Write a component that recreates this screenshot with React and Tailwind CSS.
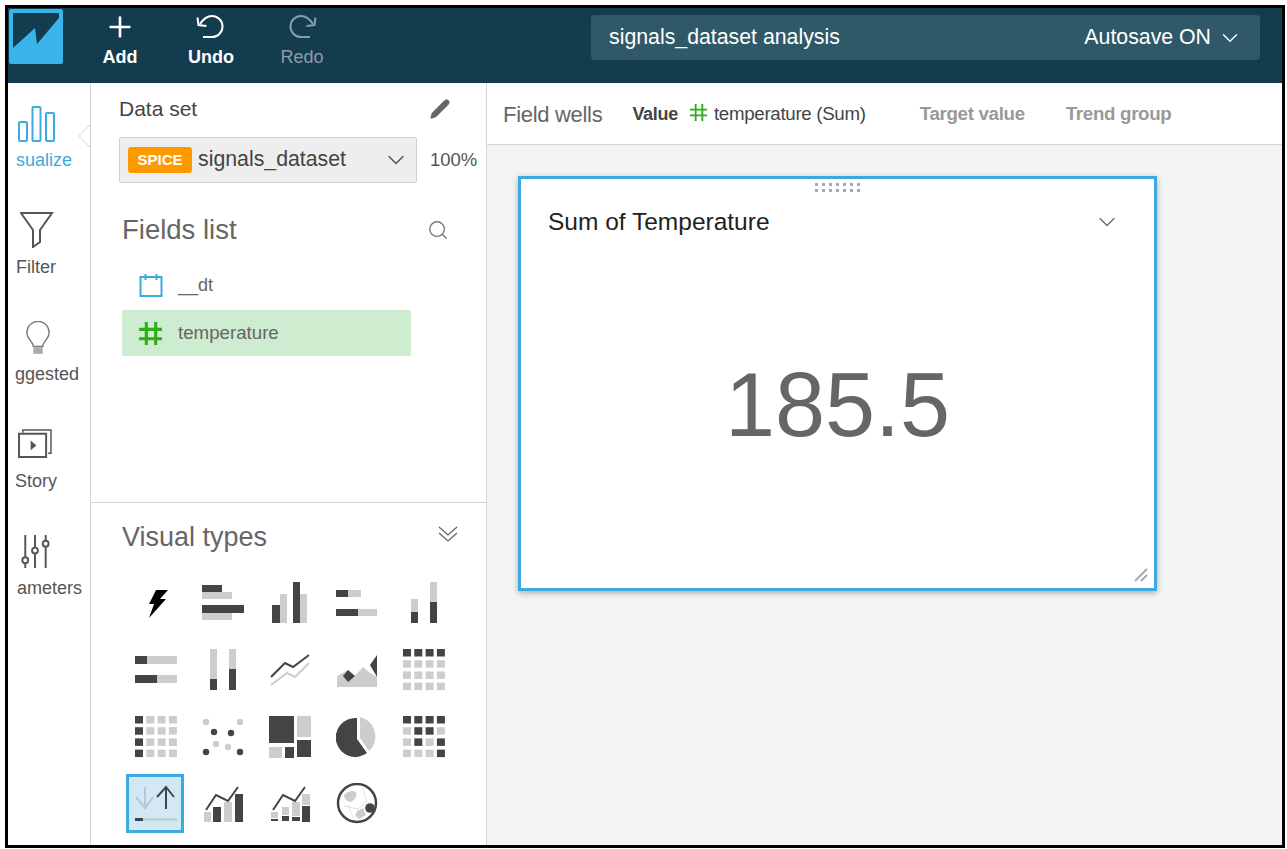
import React from 'react';
import { Plus, ChevronDown, Search, Pencil } from 'lucide-react';

const DARK = '#444444';
const LIGHT = '#cdcdcd';

// [x, y, w, h, dark?]
const Bars = ({ rects }) => (
  <svg viewBox="0 0 42 42" className="w-[42px] h-[42px]">
    {rects.map(([x, y, w, h, d], i) => (
      <rect key={i} x={x} y={y} width={w} height={h} fill={d ? DARK : LIGHT} />
    ))}
  </svg>
);

const Cells = ({ dark }) => {
  const rects = [];
  for (let r = 0; r < 4; r++) {
    for (let c = 0; c < 4; c++) {
      rects.push([c * 11.3, r * 11.2, 8, 7.5, dark.includes(r * 4 + c)]);
    }
  }
  return <Bars rects={rects} />;
};

const Svg42 = ({ children }) => (
  <svg viewBox="0 0 42 42" className="w-[42px] h-[42px]" fill="none">
    {children}
  </svg>
);

const VISUALS = [
  <Svg42 key="autograph">
    <path d="M21 8h12l-8 9h6L14 36l5-14h-5z" fill="#000" />
  </Svg42>,
  <Bars key="hbar" rects={[[0, 3, 20, 7, 1], [0, 10, 30, 7], [0, 23, 42, 8, 1], [0, 31, 30, 7]]} />,
  <Bars key="vbar" rects={[[3, 23, 8, 18, 1], [11, 12, 7, 29], [24, 0, 7, 41, 1], [31, 12, 7, 29]]} />,
  <Bars key="hstack" rects={[[0, 8, 12, 7, 1], [12, 8, 13, 7], [0, 27, 22, 7, 1], [22, 27, 19, 7]]} />,
  <Bars key="vstack" rects={[[8, 17, 7, 13], [8, 30, 7, 11, 1], [27, 0, 7, 20], [27, 20, 7, 21, 1]]} />,
  <Bars key="hstack100" rects={[[0, 7, 42, 8], [0, 7, 12, 8, 1], [0, 26, 42, 8], [0, 26, 22, 8, 1]]} />,
  <Bars key="vstack100" rects={[[8, 0, 7, 41], [8, 30, 7, 11, 1], [27, 0, 7, 41], [27, 20, 7, 21, 1]]} />,
  <Svg42 key="line">
    <path d="M2 28L16 14l8 4L40 6" stroke={DARK} strokeWidth="2" />
    <path d="M2 36l16-12 8 4L40 14" stroke={LIGHT} strokeWidth="2" />
  </Svg42>,
  <Svg42 key="area">
    <path d="M1 27l11-6 7 6 8-9 7 6 7 4v10H1z" fill={LIGHT} />
    <path d="M7 27l5-6 7 6-7 6z" fill={DARK} />
    <path d="M34 16l7-10v22z" fill={DARK} />
  </Svg42>,
  <Cells key="pivot" dark={[0, 1, 2, 3]} />,
  <Cells key="table" dark={[0, 4, 8, 12]} />,
  <Svg42 key="scatter">
    {[[4, 6], [38, 6], [14, 28], [26, 31]].map(([cx, cy]) => (
      <circle key={`${cx}-${cy}`} cx={cx} cy={cy} r="3.2" fill={LIGHT} />
    ))}
    {[[12, 16], [29, 17], [4, 36], [38, 36]].map(([cx, cy]) => (
      <circle key={`${cx}-${cy}`} cx={cx} cy={cy} r="3.2" fill={DARK} />
    ))}
  </Svg42>,
  <Bars key="tree" rects={[[0, 0, 25, 27, 1], [28, 0, 14, 21], [28, 24, 14, 17, 1], [0, 31, 13, 11], [16, 31, 9, 11, 1]]} />,
  <Svg42 key="pie">
    <path d="M24 1A20 20 0 0 1 33 35L24 22z" fill={LIGHT} />
    <path d="M21 2A19.5 19.5 0 1 0 31 37L21 23z" fill={DARK} />
  </Svg42>,
  <Cells key="heat" dark={[0, 1, 2, 3, 5, 6, 9, 11, 15]} />,
  <Svg42 key="kpi">
    <path d="M10 4v21M1 14l9 11 8-11" stroke="#bcc6cb" strokeWidth="2" />
    <path d="M31 26V5M22 14l9-10 8 10" stroke={DARK} strokeWidth="2" />
    <rect x="0" y="35.5" width="42" height="2" fill="#bcc6cb" />
    <rect x="0" y="35" width="8" height="3" fill={DARK} />
  </Svg42>,
  <Svg42 key="combo">
    <rect x="2" y="29" width="7" height="10" fill={LIGHT} />
    <rect x="11" y="24" width="8" height="15" fill={DARK} />
    <rect x="22" y="19" width="8" height="20" fill={LIGHT} />
    <rect x="33" y="11" width="8" height="28" fill={DARK} />
    <path d="M4 27L14 12l12 6L36 4" stroke={DARK} strokeWidth="2" />
  </Svg42>,
  <Svg42 key="combo-stack">
    <rect x="2" y="29" width="7" height="6" fill={LIGHT} />
    <rect x="2" y="36" width="7" height="2" fill={DARK} />
    <rect x="13" y="24" width="7" height="8" fill={LIGHT} />
    <rect x="13" y="33" width="7" height="5" fill={DARK} />
    <rect x="23" y="19" width="8" height="14" fill={LIGHT} />
    <rect x="23" y="34" width="8" height="4" fill={DARK} />
    <rect x="33" y="11" width="8" height="11" fill={LIGHT} />
    <rect x="33" y="23" width="8" height="16" fill={DARK} />
    <path d="M4 27L14 12l12 6L36 4" stroke={DARK} strokeWidth="2" />
  </Svg42>,
  <Svg42 key="map">
    <path d="M8 12c4-4 9-5 12-3 1 4-1 9-6 10-3-1-6-3-6-7z" fill={LIGHT} />
    <path d="M21 28l6-3 3 7-7 4-4-3z" fill={LIGHT} />
    <path d="M26 4l5 14-9 8-14-3M12 22l6 15" stroke="#e2e2e2" strokeWidth="1" />
    <circle cx="21" cy="20" r="19" stroke={DARK} strokeWidth="2.5" />
    <circle cx="34" cy="25" r="4.8" fill={DARK} />
  </Svg42>,
];

const BarChartIcon = () => (
  <svg viewBox="0 0 37 38" className="w-[37px] h-[38px]" fill="none" stroke="#3ea9df" strokeWidth="2">
    <rect x="1" y="17" width="8" height="19" rx="1" />
    <rect x="14.5" y="2" width="8" height="34" rx="1" />
    <rect x="28" y="8" width="8" height="28" rx="1" />
  </svg>
);

const FunnelIcon = () => (
  <svg viewBox="0 0 34 36" className="w-[34px] h-[36px]" fill="none" stroke="#555" strokeWidth="2">
    <path d="M1 1h31L20 18v12l-7 5V18z" />
  </svg>
);

const BulbIcon = () => (
  <svg viewBox="0 0 28 38" className="w-[26px] h-[36px]" fill="none">
    <path d="M9 27c0-5-7-8-7-15a12 12 0 0 1 24 0c0 7-7 10-7 15z" stroke="#777" strokeWidth="1.5" />
    <rect x="9" y="28" width="10" height="7" fill="#aaa" />
  </svg>
);

const StoryIcon = () => (
  <svg viewBox="0 0 38 32" className="w-[37px] h-[31px]" fill="none" stroke="#555" strokeWidth="1.5">
    <path d="M7 5V2h29v24h-3" />
    <path d="M3 6h28v24H3z" strokeWidth="2" />
    <path d="M15 13l6 5-6 5z" fill="#555" stroke="none" />
  </svg>
);

const SlidersIcon = () => (
  <svg viewBox="0 0 30 36" className="w-[30px] h-[35px]" fill="none" stroke="#555" strokeWidth="2">
    <path d="M5 1v23m0 6v5M15 1v13m0 6v15M26 1v6m0 6v22" />
    <circle cx="5" cy="27" r="3" />
    <circle cx="15" cy="17" r="3" />
    <circle cx="26" cy="10" r="3" />
  </svg>
);

const UndoIcon = ({ color, flip }) => (
  <svg
    viewBox="0 0 30 26"
    className={`w-[30px] h-[26px] ${flip ? '-scale-x-100' : ''}`}
    fill="none"
    stroke={color}
    strokeWidth="2"
  >
    <path d="M4 10C8 4 12 2 16 2a10.5 10.5 0 0 1 0 21H7" />
    <path d="M1.5 3.5L2.5 11l8 1" />
  </svg>
);

const NAV = [
  { label: 'sualize', icon: <BarChartIcon />, box: 'pl-[8px] h-[107px]', iconBox: 'h-[46px] pl-[2px] pt-[3px]', text: 'text-[#3ea9df]' },
  { label: 'Filter', icon: <FunnelIcon />, box: 'pl-[8px] h-[107px]', iconBox: 'h-[46px] pl-[4px] pt-[2px]', text: 'text-[#555]' },
  { label: 'ggested', icon: <BulbIcon />, box: 'pl-[7px] h-[107px]', iconBox: 'h-[46px] pl-[10px] pt-[5px]', text: 'text-[#555]' },
  { label: 'Story', icon: <StoryIcon />, box: 'pl-[7px] h-[107px]', iconBox: 'h-[46px] pl-[1px]', text: 'text-[#555]' },
  { label: 'ameters', icon: <SlidersIcon />, box: 'pl-[9px] h-[107px]', iconBox: 'h-[46px] pl-[3px] pt-[2px]', text: 'text-[#555]' },
];

const ToolButton = ({ icon, label, muted, className }) => (
  <div className={`flex flex-col items-center ${className}`}>
    <div className="h-[38px] flex items-center">{icon}</div>
    <span className={`text-[18px] leading-[22px] ${muted ? 'text-[#8b9da6]' : 'text-white font-bold'}`}>{label}</span>
  </div>
);

const App = () => {
  return (
    <div className="w-[1287px] h-[849px] bg-white pt-[5px] pl-[5px] pr-[2px] pb-[1px] font-['Liberation_Sans',Arial,sans-serif]">
      <div className="w-full h-full border-[3px] border-black flex flex-col overflow-hidden">
        {/* top bar */}
        <header className="h-[75px] shrink-0 bg-[#143c4f] flex items-start">
          <div className="w-[54px] h-[55px] mt-[1px] ml-[1px] bg-[#3bb4ec] rounded-[2px]">
            <svg viewBox="0 0 54 55" className="w-full h-full">
              <path d="M4 4h46v5L28 35l-2-16L4 39z" fill="#143c4f" />
            </svg>
          </div>
          <div className="flex">
            <ToolButton className="w-[60px] ml-[27px]" icon={<Plus size={32} color="#fff" strokeWidth={2} />} label="Add" />
            <ToolButton className="w-[60px] ml-[31px]" icon={<UndoIcon color="#fff" />} label="Undo" />
            <ToolButton className="w-[60px] ml-[31px]" muted icon={<UndoIcon color="#8b9da6" flip />} label="Redo" />
          </div>
          <div className="ml-[259px] mt-[7px] w-[669px] h-[45px] rounded-[4px] bg-[#2f5968] flex items-center justify-between pl-[18px] pr-[17px] pt-[1px] text-white text-[21.3px]">
            <span>signals_dataset analysis</span>
            <span className="flex items-center gap-[6px]">
              Autosave ON
              <ChevronDown size={26} strokeWidth={1.3} />
            </span>
          </div>
        </header>

        <div className="flex-1 flex min-h-0">
          {/* icon rail */}
          <nav className="relative w-[83px] shrink-0 border-r border-[#d5d5d5] pt-[16px] overflow-hidden">
            {NAV.map((n) => (
              <div key={n.label} className={n.box}>
                <div className={`flex items-center ${n.iconBox}`}>{n.icon}</div>
                <div className={`text-[18px] leading-[24px] mt-[3px] whitespace-nowrap ${n.text}`}>{n.label}</div>
              </div>
            ))}
            <svg viewBox="0 0 13 24" className="absolute right-[-1px] top-[41px] w-[13px] h-[24px]">
              <path d="M13 0L1 12l12 12" fill="#fff" stroke="#d5d5d5" />
            </svg>
          </nav>

          {/* data panel */}
          <aside className="w-[396px] shrink-0 border-r border-[#d5d5d5] flex flex-col">
            <div className="h-[420px] shrink-0 border-b border-[#d5d5d5] pl-[28px] pt-[14px]">
              <div className="flex items-center justify-between w-[332px] h-[24px]">
                <span className="text-[21px] text-[#444]">Data set</span>
                <Pencil size={22} fill="#666" stroke="#666" strokeWidth={1} />
              </div>
              <div className="flex items-center mt-[16px]">
                <div className="w-[298px] h-[46px] bg-[#eeeeee] border border-[#cfcfcf] rounded-[2px] flex items-center pl-[8px] pr-[6px]">
                  <span className="w-[64px] h-[26px] bg-[#ff9900] rounded-[3px] text-white text-[15px] font-bold flex items-center justify-center">SPICE</span>
                  <span className="ml-[6px] text-[21.3px] text-[#444] flex-1">signals_dataset</span>
                  <ChevronDown size={28} color="#555" strokeWidth={1.3} />
                </div>
                <span className="ml-[13px] text-[18.5px] text-[#555]">100%</span>
              </div>
              <div className="flex items-center justify-between w-[327px] ml-[3px] mt-[29px] h-[36px]">
                <span className="text-[27.5px] text-[#666]">Fields list</span>
                <Search size={22} color="#777" strokeWidth={1.5} />
              </div>
              <div className="ml-[3px] mt-[14px] w-[289px] h-[46px] flex items-center pl-[17px]">
                <svg viewBox="0 0 24 24" className="w-[24px] h-[24px]" fill="none" stroke="#3ea9df" strokeWidth="2">
                  <path d="M1.5 4h21v19h-21zM6.5 1v6M17.5 1v6" />
                </svg>
                <span className="ml-[15px] text-[18px] text-[#666]">__dt</span>
              </div>
              <div className="ml-[3px] mt-[2px] w-[289px] h-[46px] bg-[#ceeccf] rounded-[2px] flex items-center pl-[16px]">
                <svg viewBox="0 0 24 24" className="w-[25px] h-[25px]" fill="none" stroke="#2fae18" strokeWidth="3">
                  <path d="M8 1v22M17 1v22M1 8h22M1 17h22" />
                </svg>
                <span className="ml-[15px] text-[18.7px] text-[#666]">temperature</span>
              </div>
            </div>
            <div className="flex-1 min-h-0 pl-[32px] pt-[15px]">
              <div className="flex items-center justify-between w-[336px] h-[38px] -ml-[1px]">
                <span className="text-[27px] text-[#666]">Visual types</span>
                <svg viewBox="0 0 20 17" className="w-[20px] h-[17px] mb-[6px]" fill="none" stroke="#666" strokeWidth="1.3">
                  <path d="M1 1l9 8 9-8M1 7l9 8 9-8" />
                </svg>
              </div>
              <div className="grid grid-cols-[repeat(5,67px)] auto-rows-[67px] mt-[13px] -ml-[1px]">
                {VISUALS.map((v, i) => (
                  <div key={i} className="flex items-center justify-center w-[67px] h-[67px] relative">
                    {i === 15 && <div className="absolute left-[4px] top-[4px] w-[58px] h-[59px] bg-[#d2e9f5] border-[3px] border-[#3ea9df]" />}
                    <div className="relative">{v}</div>
                  </div>
                ))}
              </div>
            </div>
          </aside>

          {/* canvas */}
          <main className="flex-1 min-w-0 flex flex-col bg-[#f4f4f4]">
            <div className="h-[62px] shrink-0 bg-white border-b border-[#d5d5d5] flex items-center pl-[16px] tracking-[-0.3px] pt-[1px]">
              <span className="text-[22px] text-[#666]">Field wells</span>
              <span className="ml-[30px] text-[18px] font-bold text-[#444]">Value</span>
              <svg viewBox="0 0 20 20" className="ml-[11px] w-[19px] h-[19px] mb-[3px]" fill="none" stroke="#2fae18" strokeWidth="2">
                <path d="M7 1v18M14 1v18M1 7h18M1 13h18" />
              </svg>
              <span className="ml-[6px] text-[18.7px] text-[#444]">temperature (Sum)</span>
              <span className="ml-[54px] text-[18.7px] font-bold text-[#999]">Target value</span>
              <span className="ml-[41px] text-[18.7px] font-bold text-[#999]">Trend group</span>
            </div>
            <div className="flex-1 min-h-0 pl-[31px] pt-[31px]">
              <div className="relative w-[639px] h-[415px] bg-white border-[3px] border-[#3ea9df] shadow-[0_2px_6px_rgba(0,0,0,0.3)] flex flex-col">
                <div className="flex justify-center pt-[4px]">
                  <svg viewBox="0 0 46 10" className="w-[46px] h-[10px]" fill="#aaa">
                    {[0, 1, 2, 3, 4, 5, 6].map((i) => (
                      <g key={i}>
                        <rect x={i * 7} y="0" width="3" height="3" />
                        <rect x={i * 7} y="6" width="3" height="3" />
                      </g>
                    ))}
                  </svg>
                </div>
                <div className="flex items-center justify-between pl-[27px] pr-[33px] mt-[11px]">
                  <span className="text-[24.5px] text-[#222]">Sum of Temperature</span>
                  <ChevronDown size={28} color="#666" strokeWidth={1.1} />
                </div>
                <div className="flex-1 flex items-center justify-center pb-[19px]">
                  <span className="text-[90px] leading-none text-[#666]">185.5</span>
                </div>
                <svg viewBox="0 0 14 14" className="absolute right-[6px] bottom-[6px] w-[14px] h-[14px]" stroke="#aaa" strokeWidth="2">
                  <path d="M1 13L13 1M7 13l6-6" />
                </svg>
              </div>
            </div>
          </main>
        </div>
      </div>
    </div>
  );
};

export default App;
